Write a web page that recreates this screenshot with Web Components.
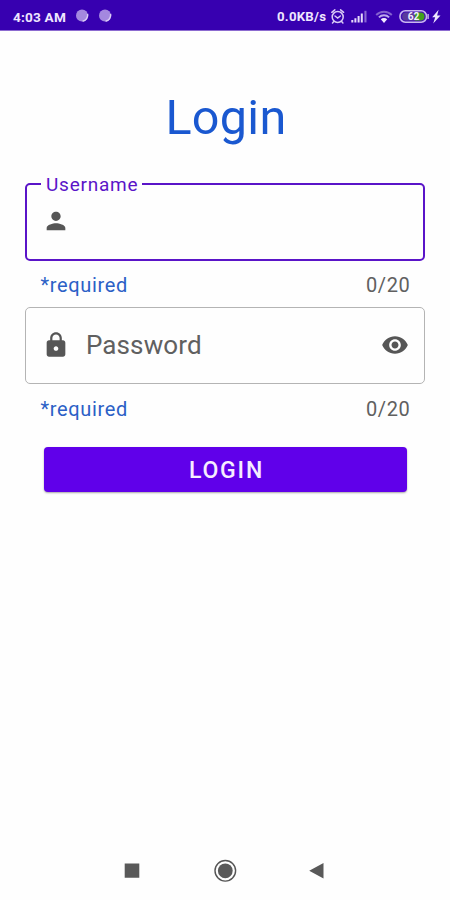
<!DOCTYPE html>
<html lang="en"><head><meta charset="utf-8"><title>Login</title>
<style>html,body{margin:0;height:100%;background:#fefefe;overflow:hidden}body{font-family:Roboto,"Liberation Sans",sans-serif}</style></head>
<body><login-screen></login-screen>
<script>
const define = (name, html, after) => customElements.define(name, class extends HTMLElement {
  connectedCallback() {
    if (this.shadowRoot) return;
    const t = document.createElement('template');
    t.innerHTML = html;
    this.attachShadow({mode: 'open'}).append(t.content.cloneNode(true));
    if (after) after(this, this.shadowRoot);
  }
});

define('status-bar', `<style>
:host{display:flex;align-items:center;box-sizing:border-box;height:31px;padding:2px 9px 0 13px;background:#3700b0;color:#efe6ff;border-bottom:1px solid #8c6bd0;font-weight:700}
.time{font-size:13.6px;letter-spacing:.2px;line-height:16px;padding-top:1px;width:62px;white-space:nowrap}
.net{font-size:13.2px;letter-spacing:.25px;margin-left:auto;width:54px;white-space:nowrap}
svg{display:block;flex:none}
</style>
<span class="time">4:03 AM</span>
<svg width="40" height="16" viewBox="-2 0 40 16"><g fill="#a488df"><circle cx="5" cy="7.5" r="6"/><circle cx="28" cy="7.5" r="6"/></g><g fill="none" stroke="#dccdf7" stroke-width="1.5"><path d="M10.6 6a6 6 0 0 1-5 7.2M33.6 6a6 6 0 0 1-5 7.2"/></g></svg>
<span class="net">0.0KB/s</span>
<svg width="110" height="20" viewBox="331 6 110 20">
<g fill="none" stroke="#d9caf6" stroke-width="1.5" stroke-linecap="round"><circle cx="337.7" cy="17" r="5.5"/><path d="M331.8 12.3l3-2.5M343.6 12.3l-3-2.5M335 16l2.7 2 2.6-2M333.8 21.6l-1.3 1.4M341.6 21.6l1.3 1.4"/></g>
<g fill="#e6dafa"><path d="M351.3 20h2v2.4h-2zM354.4 18.3h2v4.1h-2zM357.6 16h2v6.4h-2zM360.8 13.4h2v9h-2z"/><path fill="#8a68d2" d="M364.4 10.8h2.1v11.6h-2.1z"/></g>
<g fill="none" stroke-width="1.9"><path stroke="#8461ce" d="M376.2 15a11 11 0 0 1 15.6 0"/><path stroke="#bda8ec" d="M378.9 17.3a7.2 7.2 0 0 1 10.2 0"/></g><path fill="#f2e9ff" d="M380.8 19.2a4.6 4.6 0 0 1 6.4 0L384 23z"/>
<rect x="400" y="10.8" width="26.5" height="11.4" rx="5.3" fill="#4210b5" stroke="#c9b6ef" stroke-width="1.6"/><path d="M427.4 14h1.4v5h-1.4z" fill="#c9b6ef"/>
<path d="M402.2 16.5a4 4 0 0 1 4-4h11v8h-11a4 4 0 0 1-4-4z" fill="#5a3a9c"/><path d="M415 12.5h5.5a4 4 0 0 1 0 8H415z" fill="#41a01d"/>
<text x="407.7" y="20.2" font-size="10.2" font-weight="700" fill="#f3edff">62</text>
<path fill="#eee5ff" d="M438.6 9.8l-6.4 7.4h3l-2 6.2 7.3-8h-3.4z"/>
</svg>`);

define('ui-icon', `<style>:host{display:block;flex:none;width:28px;height:28px;color:#565656}svg{display:block;width:100%;height:100%}</style><svg viewBox="0 0 24 24" fill="currentColor"><path/></svg>`, (el, root) => {
  const paths = {
    person:'M12 12c2.21 0 4-1.79 4-4s-1.79-4-4-4-4 1.79-4 4 1.79 4 4 4zm0 2c-2.67 0-8 1.34-8 4v2h16v-2c0-2.66-5.33-4-8-4z',
    lock:'M18 8h-1V6c0-2.76-2.24-5-5-5S7 3.24 7 6v2H6c-1.1 0-2 .9-2 2v10c0 1.1.9 2 2 2h12c1.1 0 2-.9 2-2V10c0-1.1-.9-2-2-2zm-6 9c-1.1 0-2-.9-2-2s.9-2 2-2 2 .9 2 2-.9 2-2 2zm3.1-9H8.9V6c0-1.71 1.39-3.1 3.1-3.1S15.1 4.29 15.1 6v2z',
    eye:'M12 4.5C7 4.5 2.73 7.61 1 12c1.73 4.39 6 7.5 11 7.5s9.27-3.11 11-7.5c-1.73-4.39-6-7.5-11-7.5zM12 17c-2.76 0-5-2.24-5-5s2.24-5 5-5 5 2.24 5 5-2.24 5-5 5zm0-8c-1.66 0-3 1.34-3 3s1.34 3 3 3 3-1.34 3-3-1.34-3-3-3z'
  };
  root.querySelector('path').setAttribute('d', paths[el.getAttribute('name')]);
});

define('text-field', `<style>
:host{display:block;color:#606060}
.box{position:relative;display:flex;align-items:center;box-sizing:border-box;height:77px;padding:0 15px 1px 15.5px;border:1.5px solid #b4b4b4;border-radius:5px}
:host([focused]) .box{height:78px;border:2px solid #5a14c8;padding:0 14.5px 2px}
.name{font-size:26px;line-height:32px;letter-spacing:.1px;margin-left:16.5px}
:host([focused]) .name{position:absolute;left:14px;top:-12px;margin:0;padding:0 4px 0 5px;background:#fefefe;color:#5a14c8;font-size:19px;line-height:24px;letter-spacing:.75px}
.end{margin-left:auto}
.help{display:flex;justify-content:space-between;padding:1px 14.5px 0 15.5px;height:46px;box-sizing:border-box;align-items:center;font-size:20px;line-height:24px;letter-spacing:.65px}
:host(:not([focused])) .help{height:47px;padding-top:2px}
.hint{color:#2b60c6}
</style>
<div class="box"><slot name="start"></slot><span class="name"><slot></slot></span><span class="end"><slot name="end"></slot></span></div>
<div class="help"><span class="hint">*required</span><span>0/20</span></div>`);

define('raised-button', `<style>
:host{display:block}
button{display:flex;align-items:center;justify-content:center;width:100%;height:45px;border:0;border-radius:4px;padding:2px 0 0 2px;background:#6000ea;color:#f6edff;font:500 23px/28px Roboto,sans-serif;letter-spacing:1.8px;box-shadow:0 1px 2px rgba(0,0,0,.35)}
</style><button><slot></slot></button>`);

define('nav-bar', `<style>
:host{display:flex;justify-content:center;align-items:center;height:58px;background:#fefefe}
svg{display:block}
</style><svg width="220" height="28" viewBox="115 857 220 28" fill="#595959"><path d="M124.7 863.4h14.6v14.4h-14.6zM323.5 863v15.4L309.2 870.7z"/><circle cx="225.3" cy="870.8" r="7.4"/><circle cx="225.3" cy="870.8" r="10.3" fill="none" stroke="#555" stroke-width="1.4"/></svg>`);

define('login-screen', `<style>
:host{display:flex;flex-direction:column;height:900px}
main{flex:1;padding:58px 25px 0}
h1{margin:0;padding-left:2px;text-align:center;font-weight:400;font-size:48.5px;line-height:58px;letter-spacing:.3px;color:#1a58d0}
form{display:block;padding-top:36px}
raised-button{margin:16px 18px 0 19px}
</style>
<status-bar></status-bar>
<main><h1>Login</h1><form>
<text-field focused><ui-icon name="person" slot="start"></ui-icon>Username</text-field>
<text-field><ui-icon name="lock" slot="start"></ui-icon>Password<ui-icon name="eye" slot="end"></ui-icon></text-field>
<raised-button>LOGIN</raised-button></form></main>
<nav-bar></nav-bar>`);
</script></body></html>
